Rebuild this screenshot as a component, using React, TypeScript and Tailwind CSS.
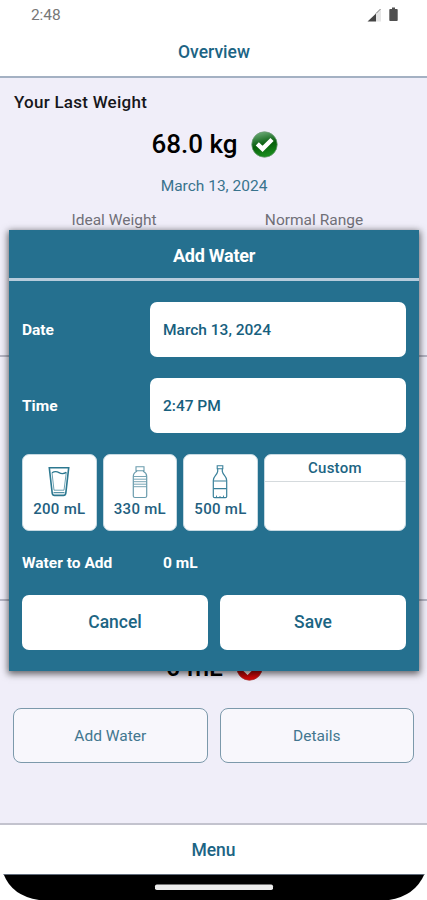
import React from 'react';

const StatusBar: React.FC = () => (
    <div className="h-7 shrink-0 flex items-start justify-between pl-[31px] pr-[29px] pt-[5px] text-[#777]">
        <span className="text-[15.5px] leading-5 tracking-[-0.1px]">2:48</span>
        <div className="flex items-center gap-[7px] pt-[2px]">
            <svg width="15" height="14" viewBox="0 0 15 14">
                <path d="M9 5.5 L14 1 V13.5 H9 Z" fill="#e6e6e6" />
                <path d="M0.5 13.5 L9 5.5 V13.5 Z" fill="#444" />
                <path d="M9 5.5 L13.5 1" stroke="#777" strokeWidth="1" />
            </svg>
            <svg width="9" height="15" viewBox="0 0 9 15">
                <path d="M3 0.5 H6 V2 H8 Q8.7 2 8.7 3 V13 Q8.7 14 8 14 H1 Q0.3 14 0.3 13 V3 Q0.3 2 1 2 H3 Z" fill="#505050" />
            </svg>
        </div>
    </div>
);

const CheckBadge: React.FC<{ color: 'green' | 'red' }> = ({ color }) => (
    <svg width="27" height="27" viewBox="0 0 28 28">
        <defs>
            <linearGradient id={`badge-${color}`} x1="0" y1="0" x2="0.25" y2="1">
                <stop offset="0" stopColor={color === 'green' ? '#7db889' : '#ec7777'} />
                <stop offset="0.45" stopColor={color === 'green' ? '#1f7028' : '#a50d0d'} />
                <stop offset="0.6" stopColor={color === 'green' ? '#075f0b' : '#ad0808'} />
                <stop offset="1" stopColor={color === 'green' ? '#188a1c' : '#d60909'} />
            </linearGradient>
        </defs>
        <circle cx="14" cy="14" r="13.2" fill={`url(#badge-${color})`} stroke={color === 'green' ? '#6b9a72' : '#a33'} strokeWidth="0.8" />
        <path d="M6.5 13.3 L12 18.6 L21.8 8.8" fill="none" stroke="#fff" strokeWidth="4.6" />
    </svg>
);

const GlassIcon: React.FC = () => (
    <svg width="22" height="34" viewBox="0 0 22 34" fill="none" stroke="#2c7890">
        <path d="M1.3 2.8 H20.7 L17.8 28.1 Q17.5 30.4 15.5 30.4 H6.5 Q4.5 30.4 4.2 28.1 Z" strokeWidth="1.6" />
        <path d="M4 7.8 Q7.5 5.6 11 7.6 T18.3 7.4" strokeWidth="1.3" />
        <path d="M4 7.8 L6 25.2 H16 L18.3 7.4" strokeWidth="0.7" />
        <path d="M5.5 27.7 H16.5" strokeWidth="1" />
    </svg>
);

const SmallBottleIcon: React.FC = () => (
    <svg width="16" height="34" viewBox="0 0 16 34" fill="none" stroke="#6a9cad">
        <path d="M4 1.7 H12 V5.7 H4 Z" strokeWidth="1.1" />
        <path d="M4.5 5.7 V6.5 Q1.3 8 1.3 11.5 V31 Q1.3 32.5 3 32.5 H13 Q14.7 32.5 14.7 31 V11.5 Q14.7 8 11.5 6.5 V5.7" strokeWidth="1.2" />
        <path d="M1.5 11.5 H14.5 M1.5 14.2 H14.5 M1.5 16.7 H14.5 M1.5 19.2 H14.5 M1.5 21.7 H14.5" strokeWidth="0.9" />
    </svg>
);

const LargeBottleIcon: React.FC = () => (
    <svg width="16" height="34" viewBox="0 0 16 34" fill="none" stroke="#39809a">
        <path d="M5.2 0.8 H10.8 V3.8 H5.2 Z" strokeWidth="1.1" />
        <path d="M5.7 3.8 V6.3 Q5.3 8.5 3.2 10.8 Q1.3 13 1.3 15.5 V31.5 Q1.3 32.7 2.7 32.7 H13.3 Q14.7 32.7 14.7 31.5 V15.5 Q14.7 13 12.8 10.8 Q10.7 8.5 10.3 6.3 V3.8" strokeWidth="1.2" />
        <path d="M1.5 16 H14.5 M1.5 23.7 H14.5" strokeWidth="1.2" />
        <path d="M4.5 32 V30.6 M8 32 V31 M11.5 32 V30.6" strokeWidth="0.9" />
    </svg>
);

const presets = [
    { amount: '200 mL', icon: <GlassIcon /> },
    { amount: '330 mL', icon: <SmallBottleIcon /> },
    { amount: '500 mL', icon: <LargeBottleIcon /> },
];

const Field: React.FC<{ label: string; value: string }> = ({ label, value }) => (
    <div className="flex items-center h-[55px]">
        <span className="w-32 pt-0.5 font-bold text-[15.5px] text-white">{label}</span>
        <button className="flex-1 h-full rounded-[7px] bg-white pl-[13px] pt-0.5 text-left font-medium text-[15.5px] text-[#17607e]">
            {value}
        </button>
    </div>
);

const AddWaterDialog: React.FC = () => (
    <div
        role="dialog"
        className="absolute left-[9px] top-[230px] w-[410px] h-[441px] flex flex-col bg-[#25708f] shadow-[0_2px_7px_1px_rgba(0,0,0,0.6)]"
    >
        <h2 className="h-[51px] shrink-0 border-b-[3px] border-[#b7ccdc] flex items-center justify-center pt-[3px] font-bold text-[18px] tracking-[-0.25px] text-white">
            Add Water
        </h2>
        <div className="flex flex-col px-[13px] pt-[21px]">
            <div className="flex flex-col gap-[21px]">
                <Field label="Date" value="March 13, 2024" />
                <Field label="Time" value="2:47 PM" />
            </div>

            <div className="mt-[21px] h-[77px] flex gap-1.5">
                {presets.map(({ amount, icon }) => (
                    <button
                        key={amount}
                        className="w-[74.6px] rounded-[7px] border border-[#c6d9e2] bg-white flex flex-col items-center pt-[10px] font-medium text-[15px] leading-5 tracking-[0.3px] text-[#245f80]"
                    >
                        {icon}
                        <span className="whitespace-nowrap">{amount}</span>
                    </button>
                ))}
                <div className="flex-1 rounded-[7px] border border-[#c6d9e2] bg-white text-center">
                    <div className="h-[27px] border-b border-[#d5dadd] font-medium text-[15px] leading-[27px] tracking-[0.25px] text-[#1c6583]">Custom</div>
                </div>
            </div>

            <div className="flex items-center h-16 pt-0.5 font-bold text-[15.5px] text-white">
                <span className="w-[141px]">Water to Add</span>
                <span>0 mL</span>
            </div>

            <div className="flex gap-3 h-[55px] font-medium text-[17.5px] text-[#1c6583]">
                <button className="flex-1 rounded-[7px] bg-white">Cancel</button>
                <button className="flex-1 rounded-[7px] bg-white">Save</button>
            </div>
        </div>
    </div>
);

const App: React.FC = () => (
    <div className="relative w-full h-[900px] flex flex-col overflow-hidden bg-white font-[Roboto,sans-serif]">
        <StatusBar />
        <header className="h-[50px] shrink-0 border-b-2 border-[#a4b1c3] flex items-center justify-center pt-px pl-px font-medium text-[17.5px] text-[#1c6484]">
            Overview
        </header>

        <main className="flex-1 flex flex-col bg-[#f0eef9]">
            <section className="h-[279px] shrink-0 border-b-2 border-[#b5b5c4] pt-3">
                <h3 className="pl-3.5 font-medium text-[17px] leading-6 tracking-[0.25px] text-[#17171b]">Your Last Weight</h3>
                <div className="mt-[14px] pl-0.5 flex items-center justify-center gap-[13px] h-8">
                    <span className="font-medium text-[26px] text-black">68.0 kg</span>
                    <CheckBadge color="green" />
                </div>
                <p className="mt-4 pl-px text-center text-[15.5px] leading-5 text-[#39738d]">March 13, 2024</p>
                <div className="mt-3.5 grid grid-cols-2 pl-3.5 pr-[13px] text-center text-[15.5px] leading-5 text-[#707078]">
                    <span>Ideal Weight</span>
                    <span>Normal Range</span>
                </div>
            </section>

            <section className="h-[244px] shrink-0 border-b-2 border-[#b5b5c4]" />

            <section className="flex-1 flex flex-col pt-[50px]">
                <div className="pl-0.5 flex items-center justify-center gap-[13px] h-8">
                    <span className="font-medium text-[25.5px] text-black">0 mL</span>
                    <CheckBadge color="red" />
                </div>
                <div className="mt-[25px] flex gap-3 px-[13px] h-[55px] text-[15.5px] text-[#42768f]">
                    <button className="flex-1 rounded-[8px] border border-[#7c99ab] bg-[#f8f7fc] pt-0.5">Add Water</button>
                    <button className="flex-1 rounded-[8px] border border-[#7c99ab] bg-[#f8f7fc] pt-0.5">Details</button>
                </div>
            </section>
        </main>

        <nav className="h-[51px] shrink-0 border-t-2 border-[#c3c3ce] flex items-center justify-center pt-px font-medium text-[17.5px] text-[#1c6484]">
            Menu
        </nav>
        <footer className="h-[26px] shrink-0 flex justify-center">
            <svg width="427" height="26" viewBox="0 0 427 26">
                <path d="M3.5 0 H424.5 Q415 22 389 26 H39 Q12 22 3.5 0 Z" fill="#000" />
                <path d="M3.5 0 H424.5" stroke="#8290a5" strokeWidth="1.4" />
                <rect x="155" y="10.5" width="118" height="5.5" rx="1.8" fill="#ececec" />
            </svg>
        </footer>

        <AddWaterDialog />
    </div>
);

export default App;
